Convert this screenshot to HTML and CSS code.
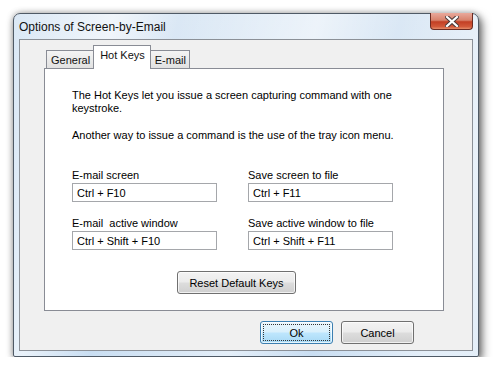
FILE: index.html
```html
<!DOCTYPE html>
<html>
<head>
  <title>Options of Screen-by-Email</title>
  <link rel="stylesheet" href="styles.css">
</head>
<body>
  <!-- Dialog window with glass frame -->
  <div class="window">
    <div class="titlebar">
      <span class="title">Options of Screen-by-Email</span>
      <button class="close-btn" aria-label="Close">
        <svg width="14" height="11" viewBox="0 0 14 11">
          <path d="M2 1 L12 10 M12 1 L2 10" stroke="#4a3a3a" stroke-width="4.2" stroke-linecap="square"/>
          <path d="M2 1 L12 10 M12 1 L2 10" stroke="#fff" stroke-width="2.2" stroke-linecap="square"/>
        </svg>
      </button>
    </div>
    <div class="client">
      <!-- Tab strip -->
      <div class="tabs">
        <div class="tab">General</div>
        <div class="tab active">Hot Keys</div>
        <div class="tab">E-mail</div>
      </div>
      <!-- Hot Keys page -->
      <div class="panel">
        <p class="intro">The Hot Keys let you issue a screen capturing command with one keystroke.</p>
        <p class="intro second">Another way to issue a command is the use of the tray icon menu.</p>
        <div class="keys">
          <div class="field">
            <label>E-mail screen</label>
            <div class="edit">Ctrl + F10</div>
          </div>
          <div class="field">
            <label>Save screen to file</label>
            <div class="edit">Ctrl + F11</div>
          </div>
          <div class="field">
            <label>E-mail &nbsp;active window</label>
            <div class="edit">Ctrl + Shift + F10</div>
          </div>
          <div class="field">
            <label>Save active window to file</label>
            <div class="edit">Ctrl + Shift + F11</div>
          </div>
        </div>
        <div class="reset-row">
          <button class="btn btn-reset">Reset Default Keys</button>
        </div>
      </div>
      <!-- Dialog buttons -->
      <div class="actions">
        <button class="btn btn-ok"><span>Ok</span></button>
        <button class="btn">Cancel</button>
      </div>
    </div>
  </div>
</body>
</html>
```

FILE: styles.css
```css
body {
  margin: 0;
  background: #fff;
  font-family: 'Liberation Sans', Arial, sans-serif;
  font-size: 11px;
  color: #000;
}
.window {
  margin: 13px 0 0 13px;
  width: 466px;
  height: 344px;
  box-sizing: border-box;
  border: 1px solid #4f5a66;
  border-radius: 7px 7px 2px 2px;
  padding: 0 5px 5px 5px;
  background:
    linear-gradient(105deg, rgba(255,255,255,0) 0%, rgba(255,255,255,0.6) 18%, rgba(255,255,255,0) 30%, rgba(255,255,255,0.5) 55%, rgba(255,255,255,0) 70%, rgba(255,255,255,0.5) 90%),
    linear-gradient(to bottom, #dbe8f5, #c9def2);
  box-shadow: 3px 4px 10px rgba(0,0,0,0.55), 0 0 6px rgba(0,0,0,0.3);
  display: flex;
  flex-direction: column;
}
.titlebar {
  height: 25px;
  display: flex;
  align-items: flex-start;
  justify-content: space-between;
}
.title {
  font-size: 12px;
  margin-top: 6px;
  color: #111;
}
.close-btn {
  width: 43px;
  height: 17px;
  margin-top: -1px;
  padding: 0;
  border: 1px solid #6b2b22;
  border-top: none;
  border-radius: 0 0 4px 4px;
  background: linear-gradient(to bottom, #e9a99b 0%, #d8826c 45%, #c23f24 55%, #d2593a 85%, #e58d6b 100%);
  display: flex;
  align-items: center;
  justify-content: center;
}
.client {
  flex: 1;
  border: 1px solid #8b9097;
  background: #f0f0f0;
  padding: 6px 28px 0 24px;
  display: flex;
  flex-direction: column;
}
.tabs {
  display: flex;
  align-items: flex-end;
  padding-left: 2px;
  height: 22px;
}
.tab {
  height: 18px;
  box-sizing: border-box;
  border: 1px solid #898c95;
  border-bottom: none;
  background: linear-gradient(to bottom, #f4f4f4, #e1e1e1);
  padding: 3px 3px 0 4px;
  line-height: 13px;
  color: #111;
}
.tab + .tab {
  margin-left: -1px;
}
.tab.active {
  height: 24px;
  margin-bottom: -1px;
  background: #fff;
  padding: 3px 5px 0 6px;
  position: relative;
  z-index: 1;
}
.panel {
  width: 400px;
  height: 243px;
  box-sizing: border-box;
  border: 1px solid #898c95;
  background: #fff;
  padding: 20px 20px 0 27px;
}
.intro {
  margin: 0;
  line-height: 13px;
  width: 345px;
}
.intro.second {
  margin-top: 14px;
}
.keys {
  display: grid;
  grid-template-columns: 145px 145px;
  column-gap: 31px;
  row-gap: 15px;
  margin-top: 27px;
}
.field label {
  display: block;
  line-height: 13px;
  margin-bottom: 1px;
}
.edit {
  height: 19px;
  box-sizing: border-box;
  border: 1px solid #a5a7ab;
  padding: 2px 4px 0;
  line-height: 14px;
}
.reset-row {
  margin-top: 21px;
  padding-left: 105px;
}
.btn {
  height: 23px;
  box-sizing: border-box;
  border: 1px solid #707070;
  border-radius: 3px;
  background: linear-gradient(to bottom, #f3f3f3 0%, #ebebeb 48%, #dddddd 52%, #cfcfcf 100%);
  font-family: 'Liberation Sans', Arial, sans-serif;
  font-size: 11px;
  color: #000;
  padding: 0;
  box-shadow: inset 0 0 0 1px rgba(255,255,255,0.7);
}
.btn-reset {
  width: 119px;
}
.actions {
  display: flex;
  justify-content: flex-end;
  gap: 8px;
  margin-top: 10px;
  padding-right: 30px;
}
.actions .btn {
  width: 73px;
}
.btn-ok {
  border-color: #3c7fb1;
  background: linear-gradient(to bottom, #eaf6fd 0%, #d9f0fc 48%, #bee6fd 52%, #a7d9f5 100%);
  padding: 2px;
}
.btn-ok span {
  display: flex;
  align-items: center;
  justify-content: center;
  height: 100%;
  border: 1px dotted #333;
  box-sizing: border-box;
}
```
